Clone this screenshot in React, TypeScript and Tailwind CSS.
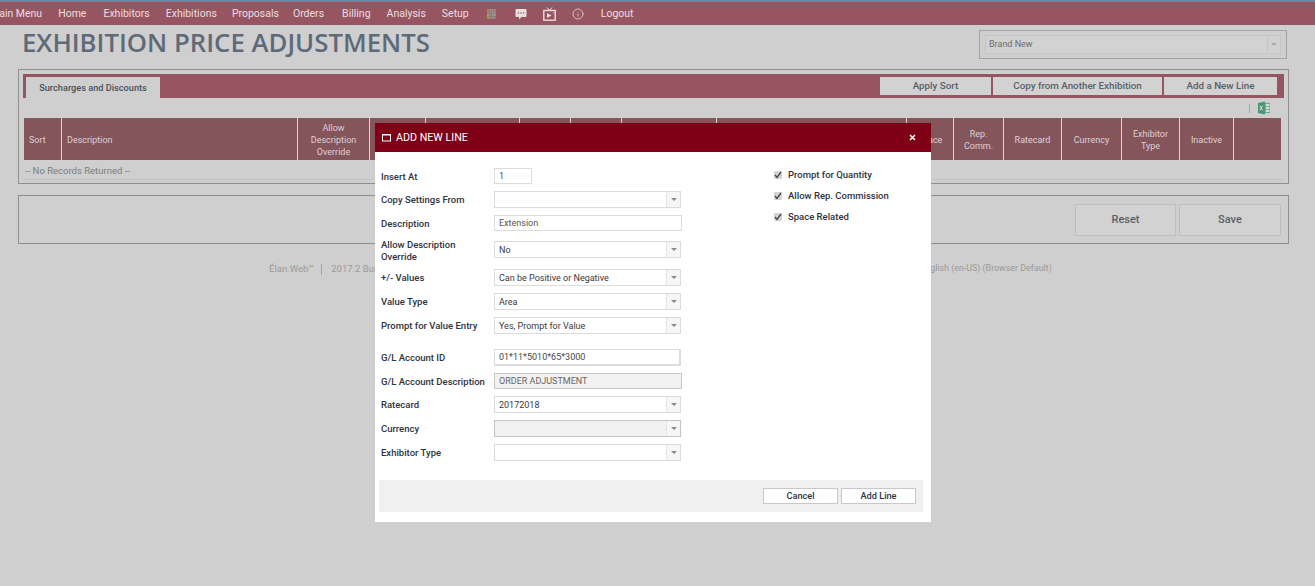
import React from "react";
import { Info } from "lucide-react";

const nav = [
  ["Main Menu", "ml-[-10px]"],
  ["Home", "ml-[16px]"],
  ["Exhibitors", "ml-[17px]"],
  ["Exhibitions", "ml-[16px]"],
  ["Proposals", "ml-[15px]"],
  ["Orders", "ml-[14px]"],
  ["Billing", "ml-[18px]"],
  ["Analysis", "ml-[16px]"],
  ["Setup", "ml-[16px]"],
] as const;

const columns: [string, string, string?][] = [
  ["w-[38px]", "Sort", "left"],
  ["w-[236px]", "Description", "left"],
  ["w-[72px]", "Allow Description Override"],
  ["w-[56px]", ""],
  ["w-[94px]", ""],
  ["w-[51px]", ""],
  ["w-[51px]", ""],
  ["w-[95px]", ""],
  ["w-[190px]", ""],
  ["w-[47px]", "Space"],
  ["w-[50px]", "Rep. Comm."],
  ["w-[58px]", "Ratecard"],
  ["w-[60px]", "Currency"],
  ["w-[58px]", "Exhibitor Type"],
  ["w-[54px]", "Inactive"],
  ["flex-1", ""],
];

function GridIcon() {
  const colors = ["#a08088", "#8f9a70", "#b8906a", "#9a80a8", "#a8806a", "#7f9f8f", "#b89a5f", "#8f8fb0", "#9aa86a", "#b07a8a", "#7f9fb0", "#b09a6a", "#8aaa7a", "#aa8a6a", "#9a9a7a", "#8a8a9a"];
  return (
    <svg width="9" height="10" viewBox="0 0 9 10" className="ml-[18px]">
      {colors.map((c, i) => (
        <rect key={i} x={(i % 4) * 2.3} y={Math.floor(i / 4) * 2.5} width="2" height="2.2" fill={c} />
      ))}
    </svg>
  );
}

function ChatIcon() {
  return (
    <svg width="12" height="12" viewBox="0 0 12 12" className="ml-[19px]">
      <path d="M1.500 1h9a1 1 0 0 1 1 1v6a1 1 0 0 1-1 1H6.500L4 11.500V9H1.500a1 1 0 0 1-1-1V2a1 1 0 0 1 1-1z" fill="#e6dfe0" />
      <circle cx="3.500" cy="5" r=".7" fill="#975561" />
      <circle cx="6" cy="5" r=".7" fill="#975561" />
      <circle cx="8.500" cy="5" r=".7" fill="#975561" />
    </svg>
  );
}

function TvIcon() {
  return (
    <svg width="13" height="14" viewBox="0 0 13 14" className="ml-[16px]">
      <path d="M4 .5l2.500 3L9 .5" fill="none" stroke="#e6dfe0" strokeWidth="1" />
      <rect x=".8" y="3.500" width="11.400" height="9.700" fill="none" stroke="#e6dfe0" strokeWidth="1.400" />
      <path d="M4 6v5l4.500-2.500z" fill="#e6dfe0" />
      <rect x="10" y="5.500" width="1" height="1" fill="#e6dfe0" />
    </svg>
  );
}

function ExcelIcon() {
  return (
    <svg width="12" height="14" viewBox="0 0 13 14" className="ml-[8px]">
      <rect x="5" y="2" width="8" height="10" fill="#d0e0d6" stroke="#5f9a7a" />
      <path d="M8 2v10M5 5.300h8M5 8.600h8" stroke="#5f9a7a" strokeWidth=".8" />
      <path d="M0 1.500 7.500 0v14L0 12.500z" fill="#4f9470" />
      <path d="M2 4.500l3 5M5 4.500l-3 5" stroke="#e0ece5" strokeWidth="1" />
    </svg>
  );
}

function Caret({ dim = false }: { dim?: boolean }) {
  return <div className={`h-0 w-0 border-x-[3.500px] border-t-[3.500px] border-x-transparent ${dim ? "border-t-[#a8a8a8]" : "border-t-[#8a8a8a]"}`} />;
}

function FormSelect({ value, disabled }: { value: string; disabled?: boolean }) {
  return (
    <div className={`flex h-[17px] w-[187px] items-center border ${disabled ? "border-[#c4c4c4] bg-[#f2f2f2]" : "border-[#dcdcdc] bg-white"}`}>
      <div className="flex-1 truncate pl-[4px] pt-[3px] text-[9px] text-[#3a3a3a]">{value}</div>
      <div className="flex h-full w-[14px] items-center justify-center border-l border-[#e4e4e4] bg-[#f6f6f6]">
        <Caret />
      </div>
    </div>
  );
}

function FormInput({ value, className }: { value: string; className: string }) {
  return <div className={`flex items-center self-start border pl-[4px] pt-[2px] text-[9px] text-[#4a4a4a] ${className}`}>{value}</div>;
}

function Row({ label, className, children }: { label: React.ReactNode; className: string; children: React.ReactNode }) {
  return (
    <div className={`flex h-[17px] items-center ${className}`}>
      <div className="w-[113px] shrink-0 whitespace-nowrap text-[9.500px] font-medium leading-[12px] text-[#2f3340]">{label}</div>
      {children}
    </div>
  );
}

function Check({ label, className }: { label: string; className: string }) {
  return (
    <div className={`flex items-center text-[9.500px] font-medium text-[#2f3340] ${className}`}>
      <div className="flex h-[8px] w-[8px] items-center justify-center rounded-[1px] bg-[#d4d4d4]">
        <svg width="8" height="8" viewBox="0 0 8 8">
          <path d="M1 4l2 2.500L7 1" fill="none" stroke="#444" strokeWidth="1.300" />
        </svg>
      </div>
      <span className="ml-[6px] pt-[1px]">{label}</span>
    </div>
  );
}

function AddLineModal() {
  return (
    <div className="absolute left-[375px] top-[123px] flex h-[399px] w-[556px] flex-col bg-white text-[10px]">
      <div className="flex h-[29px] items-center bg-[#7f0016] pl-[7px] pr-[15px] text-white">
        <svg width="9" height="9" viewBox="0 0 9 9">
          <rect x=".5" y="1.500" width="8" height="6.500" fill="none" stroke="#fff" />
          <rect x=".5" y="1" width="8" height="1.500" fill="#fff" />
        </svg>
        <span className="ml-[5px] flex-1 pt-[1px] text-[10.700px]">ADD NEW LINE</span>
        <svg width="7" height="7" viewBox="0 0 7 7">
          <path d="M1 1l5 5M6 1L1 6" stroke="#fff" strokeWidth="1.500" />
        </svg>
      </div>

      <div className="flex flex-1 pl-[6px]">
        <div className="w-[393px]">
          <Row label="Insert At" className="mt-[16px]">
            <FormInput value="1" className="h-[16px] w-[38px] border-[#dcdcdc]" />
          </Row>
          <Row label="Copy Settings From" className="mt-[6px]">
            <FormSelect value="" />
          </Row>
          <Row label="Description" className="mt-[7px]">
            <FormInput value="Extension" className="h-[16px] w-[188px] border-[#dcdcdc] text-[#555]" />
          </Row>
          <Row label={<div className="pt-[3px]">Allow Description<br />Override</div>} className="mt-[9px]">
            <FormSelect value="No" />
          </Row>
          <Row label="+/- Values" className="mt-[11px]">
            <FormSelect value="Can be Positive or Negative" />
          </Row>
          <Row label="Value Type" className="mt-[7px]">
            <FormSelect value="Area" />
          </Row>
          <Row label="Prompt for Value Entry" className="mt-[7px]">
            <FormSelect value="Yes, Prompt for Value" />
          </Row>
          <Row label="G/L Account ID" className="mt-[15px]">
            <FormInput value="01*11*5010*65*3000" className="h-[17px] w-[187px] border-[#dcdcdc] border-r-2 border-b-2 text-[#3a3a3a]" />
          </Row>
          <Row label="G/L Account Description" className="mt-[7px]">
            <FormInput value="ORDER ADJUSTMENT" className="h-[16px] w-[188px] border-[#c8c8c8] bg-[#f2f2f2] text-[#666]" />
          </Row>
          <Row label="Ratecard" className="mt-[6px]">
            <FormSelect value="20172018" />
          </Row>
          <Row label="Currency" className="mt-[7px]">
            <FormSelect value="" disabled />
          </Row>
          <Row label="Exhibitor Type" className="mt-[7px]">
            <FormSelect value="" />
          </Row>
        </div>
        <div className="pt-[16px]">
          <Check label="Prompt for Quantity" className="h-[14px]" />
          <Check label="Allow Rep. Commission" className="mt-[7px] h-[14px]" />
          <Check label="Space Related" className="mt-[7px] h-[14px]" />
        </div>
      </div>

      <div className="mb-[10px] ml-[4px] mr-[8px] flex h-[32px] items-center justify-end gap-[3px] bg-[#f0f0f0] pr-[7px] text-[9.200px]">
        <button className="h-[16px] w-[75px] border border-[#c8c8c8] bg-white font-medium text-[#2f3340]">Cancel</button>
        <button className="h-[16px] w-[75px] border border-[#c8c8c8] bg-white font-medium text-[#2f3340]">Add Line</button>
      </div>
    </div>
  );
}

export default function App() {
  return (
    <div className="relative h-[586px] w-[1315px] overflow-hidden bg-[#cfcfcf] font-['Roboto',sans-serif] text-[#55606e]">
      <div className="h-[2px] bg-[#5f8ea0]" />
      <div className="flex h-[23px] items-center bg-[#975561] pt-[1px] text-[10.500px] text-[#eadfe1]">
        {nav.map(([name, cls]) => (
          <span key={name} className={cls}>{name}</span>
        ))}
        <GridIcon />
        <ChatIcon />
        <TvIcon />
        <Info size={12} strokeWidth={1.500} className="ml-[16px] text-[#e6dfe0]" />
        <span className="ml-[17px]">Logout</span>
      </div>

      <div className="flex h-[44px] items-start justify-between pl-[22px] pr-[28px]">
        <h1 className="mt-[1px] font-['Open_Sans',sans-serif] text-[25.750px] font-semibold leading-[32px] text-[#5f6a79]">EXHIBITION PRICE ADJUSTMENTS</h1>
        <div className="mt-[5px] flex h-[29px] w-[308px] items-center border border-[#a3a3a3] px-[5px]">
          <div className="flex h-[19px] flex-1 items-center border border-[#c6c6c6] bg-[#d2d2d2] pl-[3px] text-[9px] text-[#6c6c6c]">
            <span className="flex-1 pt-[1px]">Brand New</span>
            <div className="flex h-full w-[13px] items-center justify-center border-l border-[#c6c6c6]">
              <Caret dim />
            </div>
          </div>
        </div>
      </div>

      <div className="mx-[18px] h-[115px] w-[1271px] border border-[#8f8f8f] p-[4px]">
        <div className="flex h-[24px] items-start justify-between bg-[#975561] pl-[3px] pr-[7px] pt-[3px]">
          <div className="flex h-[21px] w-[134px] items-center justify-center bg-[#cfcfcf] text-[9.200px] font-medium text-[#4a4f5a]">Surcharges and Discounts</div>
          <div className="flex gap-[2px] text-[9.800px] font-medium text-[#5a5f68]">
            <div className="flex h-[18px] w-[111px] items-center justify-center bg-[#d2d2d2]">Apply Sort</div>
            <div className="flex h-[18px] w-[169px] items-center justify-center bg-[#d2d2d2]">Copy from Another Exhibition</div>
            <div className="flex h-[18px] w-[113px] items-center justify-center bg-[#d2d2d2]">Add a New Line</div>
          </div>
        </div>
        <div className="flex h-[20px] items-center justify-end pr-[14px]">
          <div className="h-[9px] w-px bg-[#a8b07a]" />
          <ExcelIcon />
        </div>
        <div className="ml-px mr-[3px] flex h-[42px] w-[1257px] bg-[#85555c] text-[9px] leading-[12px] text-[#dcd2d4]">
          {columns.map(([w, label, align], i) => (
            <div
              key={i}
              className={`flex shrink-0 items-center border-r border-[#d8d8d8] pt-[2px] last:border-r-0 ${w} ${align === "left" ? "pl-[5px]" : "justify-center px-[4px] text-center"}`}
            >
              {label}
            </div>
          ))}
        </div>
        <div className="flex h-[20px] items-center border-b border-[#c4c4c4] pl-[2px] pt-[4px] text-[9.500px] text-[#7d7d7d] [font-variant-ligatures:none]">-- No Records Returned --</div>
      </div>

      <div className="mx-[18px] mt-[11px] flex h-[49px] w-[1271px] items-center justify-end gap-[3px] border border-[#8f8f8f] pr-[7px] text-[11px] font-medium text-[#5a606a]">
        <div className="flex h-[32px] w-[101px] items-center justify-center border border-[#bdbdbd] bg-[#d2d2d2] pt-[1px]">Reset</div>
        <div className="flex h-[32px] w-[102px] items-center justify-center border border-[#bdbdbd] bg-[#d2d2d2] pt-[1px]">Save</div>
      </div>

      <div className="mt-[18px] flex items-center pl-[269px] text-[9.500px] text-[#9a9a9a]">
        <span>Élan.Web™</span>
        <div className="mx-[7px] h-[11px] w-px bg-[#a5a5a5]" />
        <span className="ml-[2px] w-[589px]">2017.2 Build 1124</span>
        <span className="text-[8.900px]">English (en-US) (Browser Default)</span>
      </div>

      <AddLineModal />
    </div>
  );
}
